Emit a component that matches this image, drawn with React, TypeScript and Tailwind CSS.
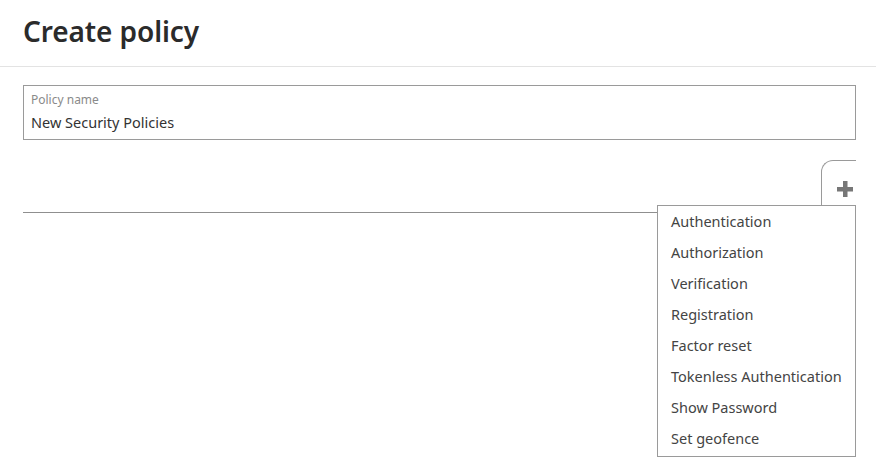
import React from 'react';

const menuItems = [
  'Authentication',
  'Authorization',
  'Verification',
  'Registration',
  'Factor reset',
  'Tokenless Authentication',
  'Show Password',
  'Set geofence',
];

const PlusIcon = () => (
  <svg width="16" height="16" viewBox="0 0 16 16" className="block">
    <rect x="6" y="0" width="4.5" height="16" fill="#777" />
    <rect x="0" y="6" width="16" height="4.5" fill="#777" />
  </svg>
);

export default function App() {
  return (
    <div className="w-[876px] h-[462px] bg-white overflow-hidden font-['Noto_Sans',sans-serif] text-[#333]">
      {/* Header */}
      <div className="h-[67px] border-b border-[#e3e3e3] px-[23px] pt-[11px]">
        <h1 className="text-[28px] leading-[40px] font-semibold text-[#2b2b2b] tracking-[-0.1px]">Create policy</h1>
      </div>

      <div className="pl-[23px] pr-[20px]">
        {/* Policy name field */}
        <div className="mt-[18px] h-[55px] border border-[#9a9a9a] px-[7px] pt-[6px]">
          <div className="text-[12px] leading-[16px] text-[#8a8a8a]">Policy name</div>
          <div className="mt-[3px] text-[14.5px] leading-[22px] text-[#333]">New Security Policies</div>
        </div>

        {/* Tab strip */}
        <div className="relative mt-[20px] flex h-[53px]">
          <div className="flex-1 border-b border-[#8f8f8f]" />
          <div className="w-[35px] border-t border-l border-[#9a9a9a] rounded-tl-[12px] flex items-center justify-center pl-[12px] pt-[3px]">
            <PlusIcon />
          </div>

          {/* Dropdown */}
          <div className="absolute left-[634px] top-[45px] w-[199px] border border-[#9a9a9a] bg-white pb-[2px]">
            {menuItems.map((item) => (
              <div key={item} className="h-[31px] px-[13px] flex items-center text-[14.5px] text-[#444] whitespace-nowrap">
                {item}
              </div>
            ))}
          </div>
        </div>
      </div>
    </div>
  );
}
